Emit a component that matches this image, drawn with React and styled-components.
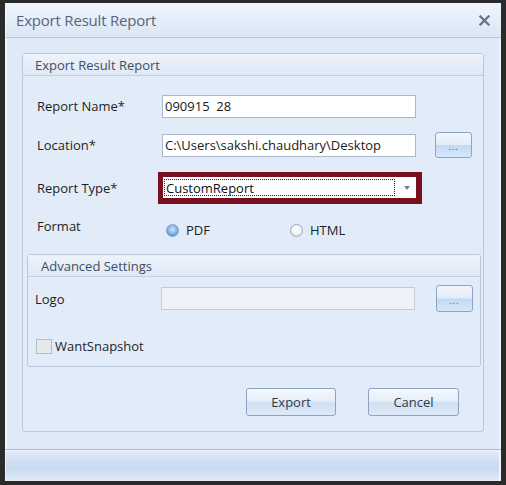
import React from 'react'
import styled, { createGlobalStyle } from 'styled-components'

const GlobalStyle = createGlobalStyle`
  html, body {
    margin: 0;
    padding: 0;
    background: #2a2a2a;
  }
  body {
    font-family: "Open Sans", "Noto Sans", sans-serif;
  }
`

const Frame = styled.div`
  width: 506px;
  height: 485px;
  box-sizing: border-box;
  padding: 3px 5px 4px 5px;
  background: #2b2b2b;
  display: flex;
`

const Window = styled.div`
  flex: 1;
  display: flex;
  flex-direction: column;
  background: #dfeaf8;
`

const TitleBar = styled.div`
  height: 34px;
  flex: none;
  display: flex;
  align-items: center;
  justify-content: space-between;
  padding: 0 11px 0 10px;
  background: linear-gradient(#f0f5fc, #e3ecf8 60%, #dbe6f4);
  border-bottom: 1px solid #b9cadf;
  border-left: 1px solid #f7f9fd;
`

const Title = styled.span`
  font-size: 15px;
  color: #56657c;
  letter-spacing: -0.2px;
`

const Body = styled.div`
  flex: 1;
  padding: 15px 15px 16px 15px;
  border-left: 2px solid #f1f6fd;
  border-right: 2px solid #eaf1fb;
  box-sizing: border-box;
`

const Footer = styled.div`
  height: 32px;
  flex: none;
  box-sizing: border-box;
  border-top: 1px solid #aebfd4;
  background: linear-gradient(#e6eef9, #d0dff1 35%, #c9daef 60%, #e2ebf8);
  box-shadow: inset 1px 0 #f3f7fd, inset -2px 0 #eef4fc;
`

const Group = styled.div`
  border: 1px solid #b9c8db;
  border-radius: 3px;
  background: #e2ecf9;
  flex: ${p => p.$grow ? 1 : 'none'};
`

const GroupHeader = styled.div`
  height: 22px;
  box-sizing: border-box;
  display: flex;
  align-items: center;
  padding-left: ${p => p.$pad || 12}px;
  border-bottom: 1px solid #c1cfe0;
  background: linear-gradient(#edf3fb, #dee8f5);
  font-size: 13px;
  color: #3f4e64;
`

const GroupContent = styled.div`
  padding: ${p => p.$padding};
  display: flex;
  flex-direction: column;
`

const Row = styled.div`
  display: flex;
  align-items: ${p => p.$align || 'center'};
  height: ${p => p.$h}px;
  margin-top: ${p => p.$mt || 0}px;
  padding-left: ${p => p.$pl || 0}px;
`

const Label = styled.div`
  width: ${p => p.$w || 125}px;
  flex: none;
  font-size: 13px;
  color: #1e1e1e;
  margin-top: ${p => p.$mt || 0}px;
`

const TextInput = styled.div`
  width: 254px;
  height: 23px;
  box-sizing: border-box;
  border: 1px solid ${p => p.$disabled ? '#c0ccdb' : '#a9b8cc'};
  background: ${p => p.$disabled ? '#eef2f8' : '#ffffff'};
  font-size: 13px;
  color: #1a1a1a;
  display: flex;
  align-items: center;
  padding-left: 2px;
  white-space: pre;
`

const DotsButton = styled.div`
  width: 37px;
  height: ${p => p.$h || 26}px;
  margin-left: ${p => p.$ml || 19}px;
  box-sizing: border-box;
  border: 1px solid #8ea4c1;
  border-radius: 3px;
  background: linear-gradient(#f1f6fd, #e3ecf8 48%, #c2d8f3 52%, #d8e7f9);
  display: flex;
  align-items: center;
  justify-content: center;
  font-size: 9px;
  letter-spacing: 1px;
  color: #42546c;
  padding-top: 3px;
`

const Highlight = styled.div`
  margin-left: -4px;
  border-style: solid;
  border-color: #780f1f;
  border-width: 5px 6px 6px 5px;
`

const Combo = styled.div`
  width: 253px;
  height: 21px;
  box-sizing: border-box;
  background: #fff;
  display: flex;
  align-items: center;
  padding: 0 6px 0 1px;
`

const FocusText = styled.div`
  flex: 1;
  height: 17px;
  box-sizing: border-box;
  border: 1px dotted #222;
  font-size: 13px;
  color: #111;
  display: flex;
  align-items: center;
  padding-left: 1px;
`

const Arrow = styled.div`
  width: 0;
  height: 0;
  margin-left: 9px;
  border-left: 3.5px solid transparent;
  border-right: 3.5px solid transparent;
  border-top: 4px solid #74839a;
`

const RadioItem = styled.div`
  display: flex;
  align-items: center;
  width: ${p => p.$w}px;
  margin-left: ${p => p.$ml || 0}px;
  margin-top: 6px;
  font-size: 13px;
  color: #1e1e1e;
  gap: 7px;
`

const RadioDot = styled.span`
  width: 13px;
  height: 13px;
  box-sizing: border-box;
  border-radius: 50%;
  border: 1px solid ${p => p.$on ? '#7ea3cc' : '#9ea8b4'};
  background: ${p => p.$on
    ? 'radial-gradient(circle at 50% 40%, #cde4fa 0, #8dbbe8 45%, #5f97d2 75%, #bcd6f2 100%)'
    : 'radial-gradient(circle at 50% 40%, #ffffff 0, #eef1f5 55%, #c8cfd8 100%)'};
  flex: none;
`

const CheckBox = styled.span`
  width: 16px;
  height: 15px;
  box-sizing: border-box;
  border: 1px solid #b6bcc4;
  background: #e6e8eb;
  margin-left: 1px;
  margin-right: 3px;
  flex: none;
`

const CheckLabel = styled.span`
  font-size: 13px;
  color: #1e1e1e;
`

const ButtonRow = styled.div`
  display: flex;
  justify-content: flex-end;
  gap: 32px;
  margin-top: 21px;
  padding-right: 22px;
`

const PushButton = styled.div`
  width: ${p => p.$w}px;
  height: 28px;
  box-sizing: border-box;
  border: 1px solid #8ea3bf;
  border-radius: 3px;
  background: linear-gradient(#f4f8fd, #e6eef9 45%, #cfe0f4 55%, #dce9f8);
  display: flex;
  align-items: center;
  justify-content: center;
  font-size: 13px;
  color: #2d3a4c;
`

function CloseIcon() {
  return (
    <svg width="11" height="11" viewBox="0 0 11 11">
      <path d="M1.5 1.5 L9.5 9.5 M9.5 1.5 L1.5 9.5" stroke="#6a7587" strokeWidth="2.3" strokeLinecap="square" />
    </svg>
  )
}

export default function App() {
  return (
    <Frame>
      <GlobalStyle />
      <Window>
        <TitleBar>
          <Title>Export Result Report</Title>
          <CloseIcon />
        </TitleBar>
        <Body>
          <Group>
            <GroupHeader>Export Result Report</GroupHeader>
            <GroupContent $padding="17px 2px 15px 4px">
              <Row $h={26} $pl={10}>
                <Label>Report Name*</Label>
                <TextInput>090915  28</TextInput>
              </Row>
              <Row $h={26} $mt={13} $pl={10}>
                <Label>Location*</Label>
                <TextInput>C:\Users\sakshi.chaudhary\Desktop</TextInput>
                <DotsButton>...</DotsButton>
              </Row>
              <Row $h={32} $mt={14} $pl={10}>
                <Label>Report Type*</Label>
                <Highlight>
                  <Combo>
                    <FocusText>CustomReport</FocusText>
                    <Arrow />
                  </Combo>
                </Highlight>
              </Row>
              <Row $h={24} $mt={11} $pl={10} $align="flex-start">
                <Label $mt={2}>Format</Label>
                <RadioItem $w={124} $ml={4}>
                  <RadioDot $on />
                  PDF
                </RadioItem>
                <RadioItem $w={80}>
                  <RadioDot />
                  HTML
                </RadioItem>
              </Row>
              <Row $h={113} $mt={15} $align="stretch">
                <Group $grow>
                  <GroupHeader $pad={13}>Advanced Settings</GroupHeader>
                  <GroupContent $padding="8px 0 9px 7px">
                    <Row $h={27}>
                      <Label $w={126}>Logo</Label>
                      <TextInput $disabled />
                      <DotsButton $h={27} $ml={21}>...</DotsButton>
                    </Row>
                    <Row $h={20} $mt={24}>
                      <CheckBox />
                      <CheckLabel>WantSnapshot</CheckLabel>
                    </Row>
                  </GroupContent>
                </Group>
              </Row>
              <ButtonRow>
                <PushButton $w={90}>Export</PushButton>
                <PushButton $w={91}>Cancel</PushButton>
              </ButtonRow>
            </GroupContent>
          </Group>
        </Body>
        <Footer />
      </Window>
    </Frame>
  )
}
